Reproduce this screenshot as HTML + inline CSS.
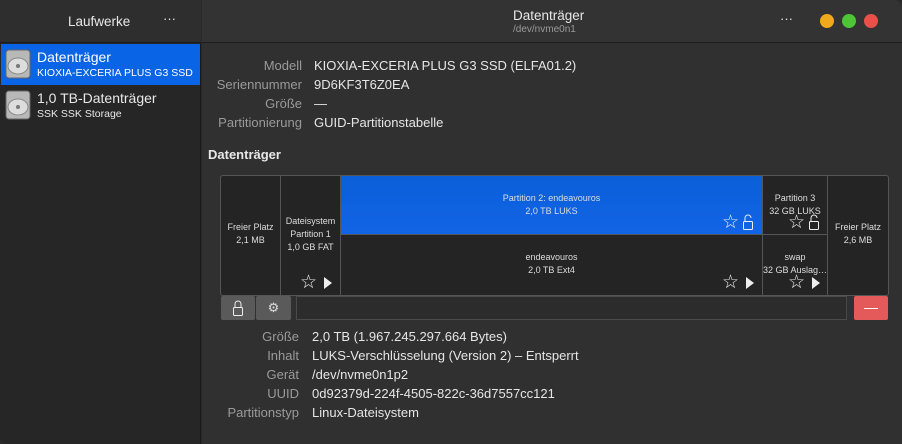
<!DOCTYPE html>
<html><head><meta charset="utf-8"><style>
*{margin:0;padding:0;box-sizing:border-box}
body{width:902px;height:444px;background:#2a2a2a;font-family:"Liberation Sans","DejaVu Sans",sans-serif;color:#e8e8e8;overflow:hidden;position:relative}
.abs{position:absolute}
#side{left:0;top:0;width:201px;height:444px;background:#262626;border-right:1px solid #1a1a1a;border-radius:8px 0 0 8px}
#main{left:202px;top:0;width:700px;height:444px;background:#303030;border-radius:0 8px 0 0}
.hdr{top:0;height:43px;background:#333;border-bottom:1px solid #1c1c1c}
.lbl{position:absolute;text-align:right;color:#9a9a9a;font-size:13px}
.val{position:absolute;font-size:13px;color:#e6e6e6}
.cell{position:absolute;font-size:9px;text-align:center;color:#ddd;line-height:13px;border-right:1px solid #555}
.dot{position:absolute;width:14px;height:14px;border-radius:7px;top:14px}
.ic{position:absolute;font-size:19px;line-height:18px;color:#eee}
.tri{position:absolute;width:0;height:0;border-left:8px solid #eee;border-top:6px solid transparent;border-bottom:6px solid transparent}
</style></head><body>
<div id="side" class="abs">
 <div class="abs hdr" style="left:0;width:201px;background:#2e2e2e"></div>
 <div class="abs" style="left:68px;top:14px;font-size:13.5px">Laufwerke</div>
 <div class="abs" style="left:163px;top:11px;font-size:13px">···</div>
 <div class="abs" style="left:1px;top:44px;width:199px;height:41px;background:#0a64e6"></div>
 <svg class="abs" style="left:5px;top:49px" width="26" height="30"><rect x="1" y="1" width="24" height="28" rx="3" fill="#b8b8b8" stroke="#666"/><ellipse cx="13" cy="17" rx="10" ry="8" fill="#ddd" stroke="#888"/><circle cx="13" cy="17" r="2" fill="#777"/></svg>
 <div class="abs" style="left:37px;top:49px;font-size:14px;color:#fff">Datenträger</div>
 <div class="abs" style="left:37px;top:67px;font-size:10.5px;color:#fff">KIOXIA-EXCERIA PLUS G3 SSD</div>
 <svg class="abs" style="left:5px;top:90px" width="26" height="30"><rect x="1" y="1" width="24" height="28" rx="3" fill="#b8b8b8" stroke="#666"/><ellipse cx="13" cy="17" rx="10" ry="8" fill="#ddd" stroke="#888"/><circle cx="13" cy="17" r="2" fill="#777"/></svg>
 <div class="abs" style="left:37px;top:90px;font-size:14px">1,0 TB-Datenträger</div>
 <div class="abs" style="left:37px;top:108px;font-size:10.5px">SSK SSK Storage</div>
</div>
<div id="main" class="abs">
 <div class="abs hdr" style="left:0;width:700px;border-radius:0 8px 0 0"></div>
 <div class="abs" style="left:311px;top:8px;font-size:13.5px">Datenträger</div>
 <div class="abs" style="left:311px;top:24px;font-size:10px;color:#9a9a9a">/dev/nvme0n1</div>
 <div class="abs" style="left:578px;top:11px;font-size:13px">···</div>
 <div class="dot" style="left:618px;background:#f0a81c"></div>
 <div class="dot" style="left:640px;background:#4ec437"></div>
 <div class="dot" style="left:662px;background:#e9504a"></div>
</div>
<div class="lbl" style="left:200px;width:102px;top:58px">Modell</div><div class="val" style="left:314px;top:58px">KIOXIA-EXCERIA PLUS G3 SSD (ELFA01.2)</div>
<div class="lbl" style="left:200px;width:102px;top:77px">Seriennummer</div><div class="val" style="left:314px;top:77px">9D6KF3T6Z0EA</div>
<div class="lbl" style="left:200px;width:102px;top:96px">Größe</div><div class="val" style="left:314px;top:96px">—</div>
<div class="lbl" style="left:200px;width:102px;top:115px">Partitionierung</div><div class="val" style="left:314px;top:115px">GUID-Partitionstabelle</div>
<div class="abs" style="left:208px;top:147px;font-size:13px;font-weight:bold">Datenträger</div>
<div class="abs" style="left:220px;top:175px;width:669px;height:121px;background:#242424;border:1px solid #555;border-radius:3px"></div>
<div class="cell" style="left:221px;top:176px;width:60px;height:119px;padding-top:45px">Freier Platz<br>2,1 MB</div>
<div class="cell" style="left:281px;top:176px;width:60px;height:119px;padding-top:39px">Dateisystem<br>Partition 1<br>1,0 GB FAT</div>
<div class="cell" style="left:341px;top:176px;width:422px;height:59px;background:linear-gradient(#0b5fd8,#1264e6);padding-top:16px;border-bottom:1px solid #555">Partition 2: endeavouros<br>2,0 TB LUKS</div>
<div class="cell" style="left:341px;top:235px;width:422px;height:60px;padding-top:16px">endeavouros<br>2,0 TB Ext4</div>
<div class="cell" style="left:763px;top:176px;width:65px;height:59px;padding-top:16px;border-bottom:1px solid #555">Partition 3<br>32 GB LUKS</div>
<div class="cell" style="left:763px;top:235px;width:65px;height:60px;padding-top:16px;white-space:nowrap;overflow:hidden">swap<br>32 GB Auslag…</div>
<div class="cell" style="left:828px;top:176px;width:60px;height:119px;padding-top:45px;border:none">Freier Platz<br>2,6 MB</div>
<div class="ic" style="left:300px;top:274px">☆</div><div class="tri" style="left:324px;top:277px"></div>
<div class="ic" style="left:722px;top:274px">☆</div><div class="tri" style="left:746px;top:277px"></div>
<div class="ic" style="left:788px;top:274px">☆</div><div class="tri" style="left:812px;top:277px"></div>
<div class="ic" style="left:722px;top:214px">☆</div>
<div class="ic" style="left:788px;top:214px">☆</div>
<svg class="abs" style="left:741px;top:213px" width="14" height="18"><path d="M4 8V5a3 3 0 0 1 6 0" stroke="#eee" fill="none"/><rect x="2.5" y="8.5" width="9" height="8" rx="1" stroke="#eee" fill="none"/></svg>
<svg class="abs" style="left:807px;top:213px" width="14" height="18"><path d="M4 8V5a3 3 0 0 1 6 0" stroke="#eee" fill="none"/><rect x="2.5" y="8.5" width="9" height="8" rx="1" stroke="#eee" fill="none"/></svg>
<div class="abs" style="left:221px;top:296px;width:34px;height:24px;background:#5a5a5a;border-radius:2px"></div>
<svg class="abs" style="left:231px;top:299px" width="14" height="18"><path d="M4 8V5a3 3 0 0 1 6 0V8" stroke="#eee" fill="none"/><rect x="2.5" y="8.5" width="9" height="8" rx="1" stroke="#eee" fill="none"/></svg>
<div class="abs" style="left:256px;top:296px;width:35px;height:24px;background:#5a5a5a;border-radius:2px;font-size:13px;text-align:center;line-height:24px;color:#ddd">⚙</div>
<div class="abs" style="left:296px;top:296px;width:551px;height:24px;background:#2c2c2c;border:1px solid #4a4a4a"></div>
<div class="abs" style="left:854px;top:296px;width:34px;height:24px;background:#e45a5a;border-radius:2px;color:#fff;text-align:center;line-height:22px;font-size:14px">—</div>
<div class="lbl" style="left:200px;width:99px;top:329px">Größe</div><div class="val" style="left:312px;top:329px">2,0 TB (1.967.245.297.664 Bytes)</div>
<div class="lbl" style="left:200px;width:99px;top:348px">Inhalt</div><div class="val" style="left:312px;top:348px">LUKS-Verschlüsselung (Version 2) – Entsperrt</div>
<div class="lbl" style="left:200px;width:99px;top:367px">Gerät</div><div class="val" style="left:312px;top:367px">/dev/nvme0n1p2</div>
<div class="lbl" style="left:200px;width:99px;top:386px">UUID</div><div class="val" style="left:312px;top:386px">0d92379d-224f-4505-822c-36d7557cc121</div>
<div class="lbl" style="left:200px;width:99px;top:405px">Partitionstyp</div><div class="val" style="left:312px;top:405px">Linux-Dateisystem</div>
</body></html>
